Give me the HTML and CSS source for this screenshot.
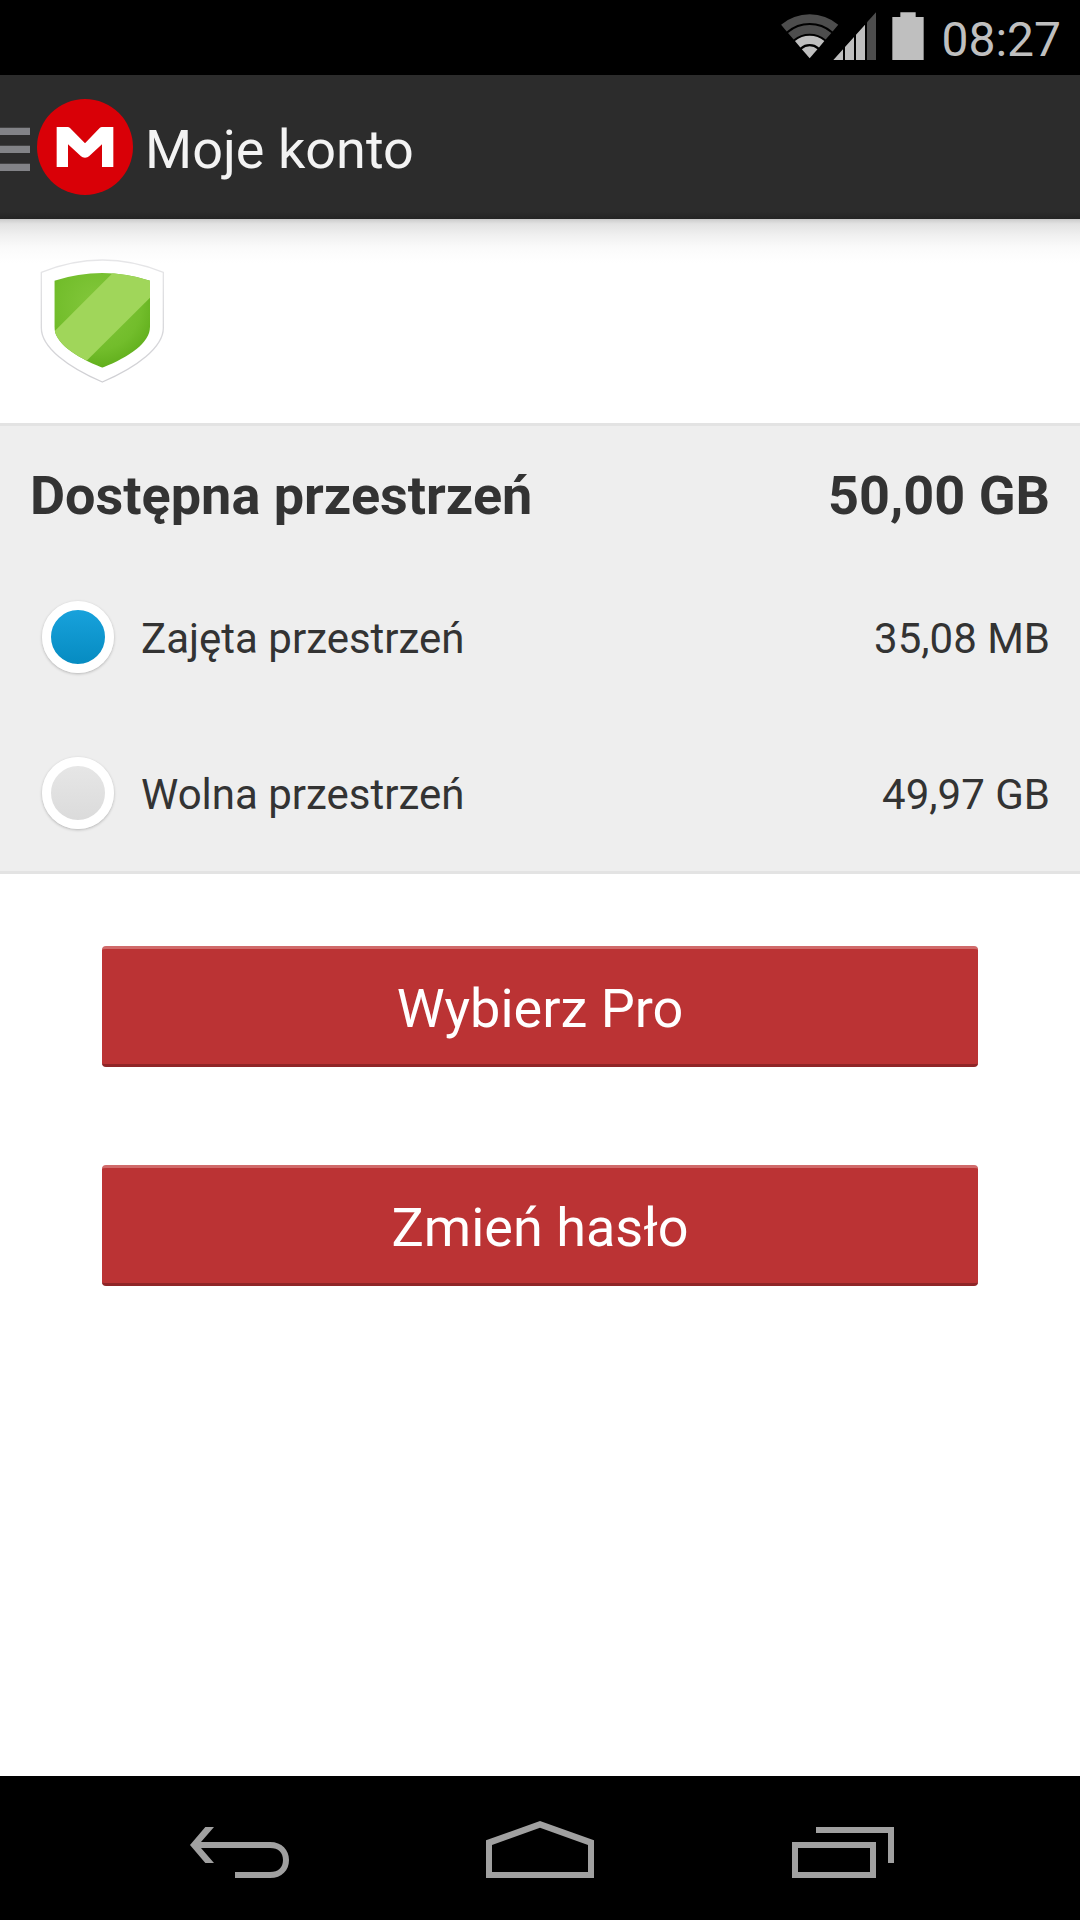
FILE: index.html
```html
<!DOCTYPE html>
<html lang="pl">
<head>
  <meta charset="utf-8">
  <meta name="viewport" content="width=device-width, initial-scale=1">
  <title>Moje konto</title>
  <link rel="stylesheet" href="styles.css">
</head>
<body>
  <div class="status-bar">
    <svg class="status-icons" viewBox="60 36 432 144" aria-hidden="true">
      <g fill="none" stroke="#4d4d4d" stroke-width="26">
        <path d="M71.700 84.500A119 119 0 0 1 226.300 84.500"/>
        <path d="M92.500 108.900A87 87 0 0 1 205.500 108.900"/>
      </g>
      <path d="M113 132.800A55.500 55.500 0 0 1 185 132.800" fill="none" stroke="#bfbfbf" stroke-width="25"/>
      <path d="M149 175L125.600 147.600A36 36 0 0 1 172.400 147.600Z" fill="#bfbfbf"/>
      <path d="M220 180L249 148V180ZM255 180V141L282 111V180ZM288 180V104L315 74V180Z" fill="#bfbfbf"/>
      <path d="M321 180V67L348 37V180Z" fill="#4d4d4d"/>
      <path d="M397 51H421V37H467V51H491V180H397Z" fill="#bfbfbf"/>
    </svg>
    <time class="clock">08:27</time>
  </div>

  <header class="app-bar">
    <button class="menu-button" type="button" aria-label="Menu">
      <svg class="menu-logo" viewBox="0 87 399 288" aria-hidden="true">
        <path d="M0 173H90V195H0ZM0 227H90V249H0ZM0 281H90V303H0Z" fill="#828387"/>
        <circle cx="255" cy="231" r="144" fill="#d90007"/>
        <path d="M170 171H203Q207 171 210 174L255 220L299 174Q302 171 306 171H340V291H306V223L267 259Q263 263 255 263Q247 263 243 259L204 223V291H170Z" fill="#fff"/>
      </svg>
    </button>
    <h1 class="app-title">Moje konto</h1>
  </header>

  <main class="account">
    <div class="badge">
      <svg class="badge-icon" viewBox="60 54 372 378" role="img" aria-label="Konto Free">
        <defs>
          <radialGradient id="shield-green" cx="0.45" cy="0.35" r="0.75">
            <stop offset="0" stop-color="#84c83c"/>
            <stop offset="0.6" stop-color="#72bd2b"/>
            <stop offset="1" stop-color="#55a512"/>
          </radialGradient>
          <linearGradient id="shield-rim" x1="0" y1="0" x2="0" y2="1">
            <stop offset="0" stop-color="#e6e6e8"/>
            <stop offset="1" stop-color="#cfcfd3"/>
          </linearGradient>
          <clipPath id="shield-shape">
            <path d="M103 122Q175 99 247 99Q319 99 390 122V260C390 308 330 349 247 383C164 349 103 308 103 260Z"/>
          </clipPath>
        </defs>
        <path d="M64 97Q155 60 247 60Q339 60 430 97V264C430 322 350 382 247 426C144 382 64 322 64 264Z" fill="#fff" stroke="url(#shield-rim)" stroke-width="4"/>
        <g clip-path="url(#shield-shape)">
          <path d="M100 90H394V390H100Z" fill="url(#shield-green)"/>
          <path d="M278 99L100 277V390H172L394 169V90H287Z" fill="#a0d65a"/>
        </g>
      </svg>
    </div>

    <section class="storage">
      <h2 class="storage-total"><span>Dostępna przestrzeń</span><span>50,00 GB</span></h2>
      <dl class="storage-list">
        <div class="storage-row">
          <dt class="storage-name"><span class="dot dot-used"></span><span class="storage-text">Zajęta przestrzeń</span></dt>
          <dd class="storage-value storage-text">35,08 MB</dd>
        </div>
        <div class="storage-row">
          <dt class="storage-name"><span class="dot dot-free"></span><span class="storage-text">Wolna przestrzeń</span></dt>
          <dd class="storage-value storage-text">49,97 GB</dd>
        </div>
      </dl>
    </section>

    <div class="actions">
      <button class="action" type="button">Wybierz Pro</button>
      <button class="action" type="button">Zmień hasło</button>
    </div>
  </main>

  <nav class="nav-bar" aria-label="System">
    <button class="nav-button" type="button" aria-label="Wstecz">
      <svg class="nav-icon" viewBox="78 174 324 180" aria-hidden="true">
        <path d="M90 255L136 201H162L123 246H330C366 246 387 270 387 300C387 331 366 354 330 354H225V336H330C356 336 369 322 369 300C369 278 356 264 330 264H123L162 309H136Z"/>
      </svg>
    </button>
    <button class="nav-button" type="button" aria-label="Ekran główny">
      <svg class="nav-icon" viewBox="978 174 324 180" aria-hidden="true">
        <path fill-rule="evenodd" d="M978 241L1140 183L1302 241V354H978ZM996 255V336H1284V255L1140 203Z"/>
      </svg>
    </button>
    <button class="nav-button" type="button" aria-label="Ostatnie aplikacje">
      <svg class="nav-icon" viewBox="78 174 324 180" aria-hidden="true">
        <path fill-rule="evenodd" d="M96 246H348V354H96ZM114 264V336H330V264ZM168 201H402V309H384V219H168Z"/>
      </svg>
    </button>
  </nav>
</body>
</html>
```

FILE: styles.css
```css
* {
  box-sizing: border-box;
}

body {
  display: flex;
  flex-direction: column;
  min-height: 100vh;
  margin: 0;
  background: #fff;
  color: #333;
  font-family: Roboto, sans-serif;
  font-size: 42px;
}

button {
  padding: 0;
  border: 0;
  background: none;
  color: inherit;
  font: inherit;
}

svg {
  display: block;
}

/* System status bar */
.status-bar {
  display: flex;
  justify-content: flex-end;
  align-items: flex-start;
  gap: 17px;
  padding: 12px 19px 7px;
  background: #000;
}

.status-icons {
  width: 144px;
  height: 48px;
}

.clock {
  color: #bfbfbf;
  font-size: 48px;
  line-height: 56px;
}

/* Application bar */
.app-bar {
  display: flex;
  align-items: center;
  gap: 12px;
  min-height: 144px;
  background: linear-gradient(#2c2c2c 95%, #242424);
}

.menu-logo {
  width: 133px;
  height: 96px;
}

.app-title {
  margin: 0;
  padding-top: 6px;
  color: #f3f3f3;
  font-size: 54px;
  font-weight: 400;
  line-height: 64px;
}

/* Account page */
.account {
  flex: 1;
  background: linear-gradient(#cbcbcb, #e2e2e2 5px, #f0f0f0 16px, #fafafa 28px, #fff 44px);
}

.badge {
  padding: 39px 40px;
}

.badge-icon {
  width: 124px;
  height: 126px;
}

.storage {
  border-top: 3px solid #e3e3e3;
  border-bottom: 3px solid #e3e3e3;
  background: #eee;
}

.storage-total,
.storage-row {
  display: flex;
  justify-content: space-between;
  align-items: center;
  padding: 0 30px;
}

.storage-total {
  min-height: 133px;
  margin: 0;
  padding-top: 6px;
  font-size: 54px;
  font-weight: 700;
  line-height: 64px;
}

.storage-list {
  margin: 0;
}

.storage-row {
  min-height: 156px;
  line-height: 48px;
}

.storage-name {
  display: flex;
  align-items: center;
  gap: 27px;
  padding-left: 12px;
}

.storage-value {
  margin: 0;
}

.storage-text {
  padding-top: 4px;
}

.dot {
  width: 72px;
  height: 72px;
  border: 9px solid #fff;
  border-radius: 50%;
  box-shadow: 0 1px 3px rgba(0, 0, 0, 0.25);
}

.dot-used {
  background: linear-gradient(#1ba5e0, #0388bd) border-box;
}

.dot-free {
  background: linear-gradient(#e8e8e8, #d9d9d9) border-box;
}

.actions {
  display: flex;
  flex-direction: column;
  gap: 98px;
  padding: 72px 102px;
}

.action {
  min-height: 121px;
  padding-top: 4px;
  border-top: 3px solid #d06a6a;
  border-bottom: 3px solid #8f2527;
  border-radius: 4px;
  background: #bb3334;
  color: #fff;
  font-size: 54px;
  line-height: 64px;
}

/* System navigation bar */
.nav-bar {
  display: flex;
  min-height: 144px;
  padding: 0 90px;
  background: #000;
}

.nav-button {
  display: flex;
  flex: 1;
  justify-content: center;
  align-items: center;
}

.nav-icon {
  width: 108px;
  height: 60px;
  fill: #a0a0a0;
}
```
